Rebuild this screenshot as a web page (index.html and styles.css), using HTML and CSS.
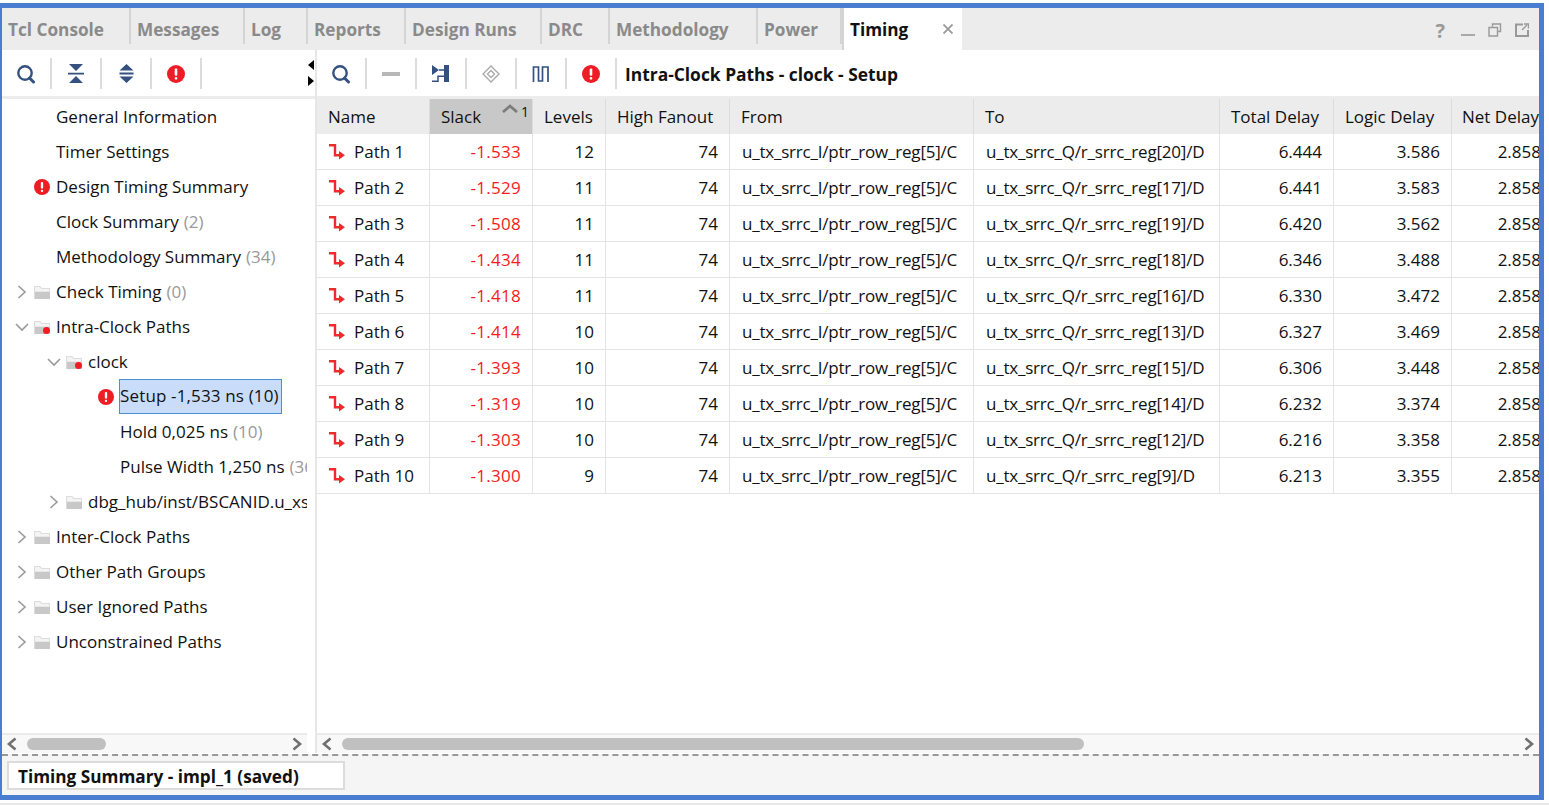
FILE: index.html
```html
<!DOCTYPE html>
<html lang="en">
<head>
    <meta charset="UTF-8">
    <title>Timing Summary - impl_1</title>
    <link rel="stylesheet" href="styles.css">
</head>
<body>
    <svg class="defs" width="0" height="0">
        <symbol id="i-search" viewBox="0 0 20 20"><circle cx="9" cy="9" r="6.7" fill="none" stroke="#34517f" stroke-width="2.4"/><path d="M13.5 14l4 4" stroke="#34517f" stroke-width="3" stroke-linecap="round"/></symbol>
        <symbol id="i-err" viewBox="0 0 18 18"><circle cx="9" cy="9" r="9" fill="#ee1c25"/><rect x="7.7" y="3.4" width="2.6" height="7.4" rx="1" fill="#fff"/><rect x="7.7" y="12" width="2.6" height="2.6" rx="1.2" fill="#fff"/></symbol>
        <symbol id="i-path" viewBox="0 0 16 16"><path d="M0 1.200h6v10h5" fill="none" stroke="#ee2a2a" stroke-width="2.400"/><path d="M10 7l6 4.200-6 4.200z" fill="#ee2a2a"/></symbol>
        <symbol id="i-folder" viewBox="0 0 16 14"><path d="M0 1h6l2 2h8v11H0z" fill="#dcdcdc"/><path d="M1 2h4.500l2 2H15v2.500H1z" fill="#f4f4f4"/><path d="M1 7h15v7H1z" fill="#c8c8c8"/></symbol>
        <symbol id="i-right" viewBox="0 0 10 14"><path d="M1.500 1l6.500 6-6.500 6" fill="none" stroke="#999" stroke-width="1.600"/></symbol>
        <symbol id="i-down" viewBox="0 0 14 10"><path d="M1 2l6 6 6-6" fill="none" stroke="#999" stroke-width="1.600"/></symbol>
    </svg>

    <div class="window">
        <div class="tabbar">
            <div class="tab">Tcl Console</div>
            <div class="tab">Messages</div>
            <div class="tab">Log</div>
            <div class="tab">Reports</div>
            <div class="tab">Design Runs</div>
            <div class="tab">DRC</div>
            <div class="tab">Methodology</div>
            <div class="tab">Power</div>
            <div class="tab tab-active">Timing
                <svg class="tab-close" width="10" height="10" viewBox="0 0 10 10"><path d="M.5.5l9 9M9.500.5l-9 9" stroke="#999" stroke-width="1.800"/></svg>
            </div>
            <div class="tab-tools">
                <span class="help">?</span>
                <svg width="14" height="14" viewBox="0 0 14 14"><path d="M0 11h14v2H0z" fill="#a8a8a8"/></svg>
                <svg width="14" height="14" viewBox="0 0 14 14"><path d="M4.500 3.500V1h8v7.500H10M1 4.500h8.500V13H1z" fill="none" stroke="#999" stroke-width="1.400"/></svg>
                <svg width="14" height="14" viewBox="0 0 14 14"><path d="M8 1.500H1v11.500h12V7" fill="none" stroke="#999" stroke-width="2"/><path d="M7 7l5-5M9 1h4.500v4.500" fill="none" stroke="#999" stroke-width="1.400"/></svg>
            </div>
        </div>

        <div class="main">
            <div class="side">
                <div class="toolbar">
                    <div class="tool"><svg class="ico20"><use href="#i-search"/></svg></div>
                    <div class="tool"><svg width="16" height="19" viewBox="0 0 16 19"><path d="M1 0h14L8 7zM0 8.700h16v1.800H0zM8 12l7 7H1z" fill="#34517f"/></svg></div>
                    <div class="tool"><svg width="15" height="19" viewBox="0 0 15 19"><path d="M7.500 0l7 6.500H.5zM.5 8.500h14v2H.5zM.5 12.500h14l-7 6.500z" fill="#34517f"/></svg></div>
                    <div class="tool"><svg class="ico18"><use href="#i-err"/></svg></div>
                </div>
                <div class="splitter-arrows">
                    <svg width="6" height="26" viewBox="0 0 6 26"><path d="M6 0v10L0 5zM0 16v10l6-5z" fill="#000"/></svg>
                </div>
                <div class="band"></div>
                <ul class="tree">
                    <li class="node lvl0"><span class="lead"></span>General Information</li>
                    <li class="node lvl0"><span class="lead"></span>Timer Settings</li>
                    <li class="node lvl0"><span class="lead"><svg class="ico16"><use href="#i-err"/></svg></span>Design Timing Summary</li>
                    <li class="node lvl0"><span class="lead"></span>Clock Summary <i>(2)</i></li>
                    <li class="node lvl0"><span class="lead"></span>Methodology Summary <i>(34)</i></li>
                    <li class="node lvl0"><svg class="arrow"><use href="#i-right"/></svg><svg class="folder"><use href="#i-folder"/></svg>Check Timing <i>(0)</i></li>
                    <li class="node lvl0"><svg class="arrow"><use href="#i-down"/></svg><span class="folder-wrap"><svg class="folder"><use href="#i-folder"/></svg><b class="dot"></b></span>Intra-Clock Paths</li>
                    <li class="node lvl1"><svg class="arrow"><use href="#i-down"/></svg><span class="folder-wrap"><svg class="folder"><use href="#i-folder"/></svg><b class="dot"></b></span>clock</li>
                    <li class="node lvl2"><span class="lead"><svg class="ico16"><use href="#i-err"/></svg></span><span class="selected">Setup -1,533 ns (10)</span></li>
                    <li class="node lvl2"><span class="lead"></span>Hold 0,025 ns <i>(10)</i></li>
                    <li class="node lvl2"><span class="lead"></span>Pulse Width 1,250 ns <i>(36)</i></li>
                    <li class="node lvl1"><svg class="arrow"><use href="#i-right"/></svg><svg class="folder"><use href="#i-folder"/></svg>dbg_hub/inst/BSCANID.u_xsdbm_id</li>
                    <li class="node lvl0"><svg class="arrow"><use href="#i-right"/></svg><svg class="folder"><use href="#i-folder"/></svg>Inter-Clock Paths</li>
                    <li class="node lvl0"><svg class="arrow"><use href="#i-right"/></svg><svg class="folder"><use href="#i-folder"/></svg>Other Path Groups</li>
                    <li class="node lvl0"><svg class="arrow"><use href="#i-right"/></svg><svg class="folder"><use href="#i-folder"/></svg>User Ignored Paths</li>
                    <li class="node lvl0"><svg class="arrow"><use href="#i-right"/></svg><svg class="folder"><use href="#i-folder"/></svg>Unconstrained Paths</li>
                </ul>
                <div class="hscroll">
                    <svg class="sb-arrow" width="12" height="14" viewBox="0 0 12 14"><path d="M9.500 1.500L3 7l6.500 5.500" fill="none" stroke="#707070" stroke-width="2.600"/></svg>
                    <div class="sb-track"><div class="sb-thumb sb-thumb-left"></div></div>
                    <svg class="sb-arrow" width="12" height="14" viewBox="0 0 12 14"><path d="M2.500 1.500L9 7l-6.500 5.500" fill="none" stroke="#707070" stroke-width="2.600"/></svg>
                </div>
            </div>

            <div class="content">
                <div class="toolbar">
                    <div class="tool"><svg class="ico20"><use href="#i-search"/></svg></div>
                    <div class="tool"><svg width="18" height="4" viewBox="0 0 18 4"><path d="M0 0h18v4H0z" fill="#b8b8b8"/></svg></div>
                    <div class="tool"><svg width="18" height="18" viewBox="0 0 18 18"><path d="M0 0l7 5-7 5zM12 0h5v17h-5z" fill="#34517f"/><path d="M7 5h6M0 16.300h6v-5h6" fill="none" stroke="#34517f" stroke-width="1.500"/></svg></div>
                    <div class="tool"><svg width="18" height="18" viewBox="0 0 18 18"><path d="M9 1l8 8-8 8-8-8zM9 5.500L12.500 9 9 12.500 5.500 9z" fill="none" stroke="#a8a8a8" stroke-width="1.300"/></svg></div>
                    <div class="tool"><svg width="18" height="16" viewBox="0 0 18 16"><path d="M1.500 16V1h5v14h4V1h5.500v15" fill="none" stroke="#34517f" stroke-width="1.700"/></svg></div>
                    <div class="tool"><svg class="ico18"><use href="#i-err"/></svg></div>
                    <div class="path-title">Intra-Clock Paths - clock - Setup</div>
                </div>
                <div class="band"></div>
                <div class="table-wrap">
                    <table class="paths">
                        <colgroup>
                            <col class="c-name"><col class="c-slack"><col class="c-levels"><col class="c-fanout"><col class="c-from"><col class="c-to"><col class="c-total"><col class="c-logic"><col class="c-net">
                        </colgroup>
                        <thead>
                            <tr>
                                <th>Name</th>
                                <th class="sorted">Slack
                                    <span class="sort"><svg width="16" height="9" viewBox="0 0 16 9"><path d="M1 8l7-6 7 6" fill="none" stroke="#7c7c7c" stroke-width="2.800"/></svg><small>1</small></span>
                                </th>
                                <th>Levels</th>
                                <th>High Fanout</th>
                                <th>From</th>
                                <th>To</th>
                                <th>Total Delay</th>
                                <th>Logic Delay</th>
                                <th class="th-net">Net Delay</th>
                            </tr>
                        </thead>
                        <tbody>
                            <tr><td><svg class="path-ico"><use href="#i-path"/></svg>Path 1</td><td class="num neg">-1.533</td><td class="num">12</td><td class="num">74</td><td class="sig">u_tx_srrc_I/ptr_row_reg[5]/C</td><td class="sig">u_tx_srrc_Q/r_srrc_reg[20]/D</td><td class="num">6.444</td><td class="num">3.586</td><td class="num">2.858</td></tr>
                            <tr><td><svg class="path-ico"><use href="#i-path"/></svg>Path 2</td><td class="num neg">-1.529</td><td class="num">11</td><td class="num">74</td><td class="sig">u_tx_srrc_I/ptr_row_reg[5]/C</td><td class="sig">u_tx_srrc_Q/r_srrc_reg[17]/D</td><td class="num">6.441</td><td class="num">3.583</td><td class="num">2.858</td></tr>
                            <tr><td><svg class="path-ico"><use href="#i-path"/></svg>Path 3</td><td class="num neg">-1.508</td><td class="num">11</td><td class="num">74</td><td class="sig">u_tx_srrc_I/ptr_row_reg[5]/C</td><td class="sig">u_tx_srrc_Q/r_srrc_reg[19]/D</td><td class="num">6.420</td><td class="num">3.562</td><td class="num">2.858</td></tr>
                            <tr><td><svg class="path-ico"><use href="#i-path"/></svg>Path 4</td><td class="num neg">-1.434</td><td class="num">11</td><td class="num">74</td><td class="sig">u_tx_srrc_I/ptr_row_reg[5]/C</td><td class="sig">u_tx_srrc_Q/r_srrc_reg[18]/D</td><td class="num">6.346</td><td class="num">3.488</td><td class="num">2.858</td></tr>
                            <tr><td><svg class="path-ico"><use href="#i-path"/></svg>Path 5</td><td class="num neg">-1.418</td><td class="num">11</td><td class="num">74</td><td class="sig">u_tx_srrc_I/ptr_row_reg[5]/C</td><td class="sig">u_tx_srrc_Q/r_srrc_reg[16]/D</td><td class="num">6.330</td><td class="num">3.472</td><td class="num">2.858</td></tr>
                            <tr><td><svg class="path-ico"><use href="#i-path"/></svg>Path 6</td><td class="num neg">-1.414</td><td class="num">10</td><td class="num">74</td><td class="sig">u_tx_srrc_I/ptr_row_reg[5]/C</td><td class="sig">u_tx_srrc_Q/r_srrc_reg[13]/D</td><td class="num">6.327</td><td class="num">3.469</td><td class="num">2.858</td></tr>
                            <tr><td><svg class="path-ico"><use href="#i-path"/></svg>Path 7</td><td class="num neg">-1.393</td><td class="num">10</td><td class="num">74</td><td class="sig">u_tx_srrc_I/ptr_row_reg[5]/C</td><td class="sig">u_tx_srrc_Q/r_srrc_reg[15]/D</td><td class="num">6.306</td><td class="num">3.448</td><td class="num">2.858</td></tr>
                            <tr><td><svg class="path-ico"><use href="#i-path"/></svg>Path 8</td><td class="num neg">-1.319</td><td class="num">10</td><td class="num">74</td><td class="sig">u_tx_srrc_I/ptr_row_reg[5]/C</td><td class="sig">u_tx_srrc_Q/r_srrc_reg[14]/D</td><td class="num">6.232</td><td class="num">3.374</td><td class="num">2.858</td></tr>
                            <tr><td><svg class="path-ico"><use href="#i-path"/></svg>Path 9</td><td class="num neg">-1.303</td><td class="num">10</td><td class="num">74</td><td class="sig">u_tx_srrc_I/ptr_row_reg[5]/C</td><td class="sig">u_tx_srrc_Q/r_srrc_reg[12]/D</td><td class="num">6.216</td><td class="num">3.358</td><td class="num">2.858</td></tr>
                            <tr><td><svg class="path-ico"><use href="#i-path"/></svg>Path 10</td><td class="num neg">-1.300</td><td class="num">9</td><td class="num">74</td><td class="sig">u_tx_srrc_I/ptr_row_reg[5]/C</td><td class="sig">u_tx_srrc_Q/r_srrc_reg[9]/D</td><td class="num">6.213</td><td class="num">3.355</td><td class="num">2.858</td></tr>
                        </tbody>
                    </table>
                </div>
                <div class="hscroll">
                    <svg class="sb-arrow" width="12" height="14" viewBox="0 0 12 14"><path d="M9.500 1.500L3 7l6.500 5.500" fill="none" stroke="#707070" stroke-width="2.600"/></svg>
                    <div class="sb-track"><div class="sb-thumb sb-thumb-right"></div></div>
                    <svg class="sb-arrow" width="12" height="14" viewBox="0 0 12 14"><path d="M2.500 1.500L9 7l-6.500 5.500" fill="none" stroke="#707070" stroke-width="2.600"/></svg>
                </div>
            </div>
        </div>

        <div class="bottom">
            <div class="bottom-tab">Timing Summary - impl_1 (saved)</div>
        </div>
    </div>
    <div class="page-edge"></div>
</body>
</html>
```

FILE: styles.css
```css
* {
    box-sizing: border-box;
}
html, body {
    margin: 0;
    height: 805px;
    overflow: hidden;
    background-color: #fff;
}
body {
    padding-top: 3px;
    font-family: "Open Sans", "Noto Sans", sans-serif;
    font-size: 17px;
    color: #111;
}
.defs {
    display: block;
    height: 0;
}
.window {
    width: 1544px;
    height: 797px;
    border: solid #4a7dcf;
    border-width: 5px 5px 5px 2px;
    display: flex;
    flex-direction: column;
    background-color: #fff;
}
.page-edge {
    height: 2px;
    margin-top: 3px;
    background-color: #e8e8e8;
}

/* top tabs */
.tabbar {
    display: grid;
    grid-template-columns: 129px 114px 63px 98px 136px 68px 148px 84px 120px 1fr;
    height: 42px;
    background-color: #ececec;
    flex-shrink: 0;
}
.tab {
    height: 36px;
    padding: 10px 0 0 6px;
    border-right: 2px solid #d4d4d4;
    font-size: 17.2px;
    font-weight: 700;
    line-height: 24px;
    color: #8a8a8a;
    white-space: nowrap;
}
.tab-active {
    height: 42px;
    background-color: #fff;
    color: #111;
    border-right: 0;
    border-left: 2px solid #d4d4d4;
    position: relative;
}
.tab-close {
    position: absolute;
    right: 9px;
    top: 16px;
}
.tab-tools {
    margin-left: auto;
    display: flex;
    align-items: center;
    gap: 13px;
    padding: 2px 10px 0 0;
}
.help {
    font-weight: 700;
    font-size: 20px;
    color: #999;
    margin-right: 3px;
}

/* panes */
.main {
    flex: 1;
    display: flex;
    min-height: 0;
}
.side {
    width: 313px;
    flex-shrink: 0;
    display: flex;
    flex-direction: column;
    position: relative;
}
.content {
    flex: 1;
    min-width: 0;
    display: flex;
    flex-direction: column;
    border-left: 2px solid #e6e6e6;
}
.toolbar {
    height: 46px;
    display: flex;
    align-items: center;
    flex-shrink: 0;
    padding-top: 1px;
}
.tool {
    width: 50px;
    height: 31px;
    display: flex;
    align-items: center;
    justify-content: center;
    border-right: 2px solid #dcdcdc;
}
.ico20 {
    width: 20px;
    height: 20px;
}
.ico18 {
    width: 18px;
    height: 18px;
}
.ico16 {
    width: 16px;
    height: 16px;
}
.splitter-arrows {
    position: absolute;
    right: 1px;
    top: 10px;
    line-height: 0;
}
.band {
    height: 3px;
    background-color: #ececec;
    flex-shrink: 0;
}

/* tree */
.tree {
    flex: 1;
    list-style: none;
    margin: 0;
    padding: 0;
    min-height: 0;
    width: 305px;
    overflow: hidden;
}
.node {
    height: 35px;
    display: flex;
    align-items: center;
    white-space: nowrap;
}
.node i {
    font-style: normal;
    color: #999;
    margin-left: 5px;
}
.lvl0 {
    padding-left: 13px;
}
.lvl1 {
    padding-left: 45px;
}
.lvl2 {
    padding-left: 94px;
}
.lead {
    display: flex;
    justify-content: flex-end;
    flex-shrink: 0;
    padding-right: 6px;
}
.lvl0 .lead {
    width: 41px;
}
.lvl2 .lead {
    width: 24px;
}
.arrow {
    width: 14px;
    height: 14px;
    margin-right: 5px;
    flex-shrink: 0;
}
.folder {
    width: 16px;
    height: 14px;
    margin-right: 6px;
    flex-shrink: 0;
}
.folder-wrap {
    position: relative;
    display: flex;
}
.dot {
    position: absolute;
    right: 6px;
    bottom: 0;
    width: 7px;
    height: 7px;
    border-radius: 50%;
    background-color: #ee1c25;
}
.selected {
    background-color: #c9ddfb;
    border: 1px solid #4a90d0;
    height: 35px;
    line-height: 32px;
    margin-left: -1px;
    padding: 0 2px 0 0;
    letter-spacing: .15px;
}

/* table */
.table-wrap {
    flex: 1;
    min-height: 0;
    overflow: hidden;
}
.paths {
    table-layout: fixed;
    border-collapse: separate;
    border-spacing: 0;
    width: 1236px;
}
.c-name { width: 113px; }
.c-slack { width: 103px; }
.c-levels { width: 73px; }
.c-fanout { width: 124px; }
.c-from { width: 244px; }
.c-to { width: 246px; }
.c-total { width: 114px; }
.c-logic { width: 118px; }
.c-net { width: 101px; }
.paths th {
    height: 35px;
    background-color: #ececec;
    border-right: 1px solid #dcdcdc;
    font-weight: 400;
    text-align: left;
    padding: 0 0 0 11px;
    white-space: nowrap;
    overflow: visible;
}
.paths th.th-net {
    padding-left: 10px;
}
.paths th.sorted {
    background-color: #c8c8c8;
    position: relative;
}
.sort {
    position: absolute;
    right: 3px;
    top: 3px;
    display: flex;
    align-items: flex-start;
    gap: 3px;
}
.sort svg {
    margin-top: 2px;
}
.sort small {
    font-size: 14px;
    line-height: 20px;
}
.paths td {
    height: 36px;
    border-right: 1px solid #e4e4e4;
    border-bottom: 1px solid #e4e4e4;
    padding: 0 11px 0 12px;
    white-space: nowrap;
}
.paths td.num {
    text-align: right;
}
.paths td.neg {
    color: #f41c1c;
    letter-spacing: .3px;
}
.paths td.sig {
    letter-spacing: -.21px;
}
.path-ico {
    width: 16px;
    height: 16px;
    margin-right: 9px;
    vertical-align: -2px;
}
.path-title {
    margin-left: 8px;
    padding-top: 1px;
    font-weight: 700;
    font-size: 17.400px;
    color: #111;
}

/* scrollbars */
.hscroll {
    height: 20px;
    flex-shrink: 0;
    display: flex;
    align-items: center;
    background-color: #f8f8f8;
    border-top: 2px solid #ebebeb;
    padding: 0 4px;
}
.side .hscroll {
    width: 305px;
}
.sb-arrow {
    flex-shrink: 0;
}
.sb-track {
    flex: 1;
    padding: 0 4px;
}
.sb-thumb {
    height: 12px;
    border-radius: 6px;
    background-color: #c0c0c0;
}
.sb-thumb-left {
    width: 79px;
    margin-left: 5px;
}
.sb-thumb-right {
    width: 742px;
    margin-left: 5px;
}

/* bottom strip */
.bottom {
    height: 41px;
    flex-shrink: 0;
    background-color: #f5f5f5;
    border-top: 2px dashed #999;
    margin-top: 1px;
    padding: 5px 0 0 5px;
}
.bottom-tab {
    width: 338px;
    height: 29px;
    background-color: #fff;
    border: 2px solid #dcdcdc;
    padding-left: 9px;
    font-weight: 700;
    font-size: 17.200px;
    line-height: 27px;
    color: #111;
}
```
